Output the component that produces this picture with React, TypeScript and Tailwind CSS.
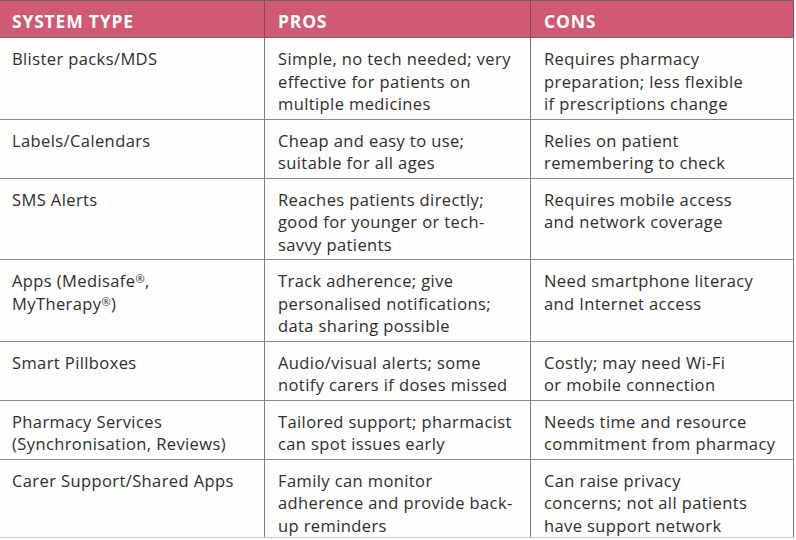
const rows: string[][][] = [
  [
    ["Blister packs/MDS"],
    ["Simple, no tech needed; very", "effective for patients on", "multiple medicines"],
    ["Requires pharmacy", "preparation; less flexible", "if prescriptions change"],
  ],
  [
    ["Labels/Calendars"],
    ["Cheap and easy to use;", "suitable for all ages"],
    ["Relies on patient", "remembering to check"],
  ],
  [
    ["SMS Alerts"],
    ["Reaches patients directly;", "good for younger or tech-", "savvy patients"],
    ["Requires mobile access", "and network coverage"],
  ],
  [
    ["Apps (Medisafe\u00ae,", "MyTherapy\u00ae)"],
    ["Track adherence; give", "personalised notifications;", "data sharing possible"],
    ["Need smartphone literacy", "and Internet access"],
  ],
  [
    ["Smart Pillboxes"],
    ["Audio/visual alerts; some", "notify carers if doses missed"],
    ["Costly; may need Wi-Fi", "or mobile connection"],
  ],
  [
    ["Pharmacy Services", "(Synchronisation, Reviews)"],
    ["Tailored support; pharmacist", "can spot issues early"],
    ["Needs time and resource", "commitment from pharmacy"],
  ],
  [
    ["Carer Support/Shared Apps"],
    ["Family can monitor", "adherence and provide back-", "up reminders"],
    ["Can raise privacy", "concerns; not all patients", "have support network"],
  ],
];

// split "®" out so it sits small and raised like the print version
const renderLine = (line: string) => {
  const parts = line.split("\u00ae");
  return parts.map((p, i) => (
    <span key={i}>
      {p}
      {i < parts.length - 1 && (
        <span className="relative -top-[4px] text-[11px] leading-none">{"\u00ae"}</span>
      )}
    </span>
  ));
};

const colClass = [
  "w-[264px]",
  "w-[266px] border-l border-[#7a7a7a]",
  "w-[264px] border-l border-r border-[#7a7a7a]",
];

export default function App() {
  return (
    <div
      className="w-[796px] h-[540px] overflow-hidden bg-[#fdfdfc] text-[#2e2e2e]"
      style={{ fontFamily: '"Open Sans", "Noto Sans", sans-serif' }}
    >
      <div className="w-[794px]">
        {/* Header */}
        <div className="flex h-[38px] bg-[#cf5a72] border-t border-b border-[#7d5a62] text-white font-bold text-[17.5px] tracking-[0.8px]">
          {["SYSTEM TYPE", "PROS", "CONS"].map((h, i) => (
            <div
              key={h}
              className={`${colClass[i]} flex items-center pt-[4px] pl-[12px] ${i > 0 ? "pl-[13px] !border-[#8e4455]" : ""}`}
            >
              {h}
            </div>
          ))}
        </div>

        {/* Body rows */}
        {rows.map((row, r) => {
          const last = r === rows.length - 1;
          return (
            <div
              key={r}
              className={`flex text-[16.5px] leading-[22.5px] tracking-[0.4px] ${r > 0 ? "border-t border-[#8a8a8a]" : ""} ${last ? "border-b !border-b-[#c9c9c9]" : ""}`}
            >
              {row.map((cell, c) => (
                <div
                  key={c}
                  className={`${colClass[c]} pt-[10px] ${last ? "pb-0" : "pb-[3px]"} whitespace-nowrap ${c === 0 ? "pl-[12px]" : "pl-[13px]"}`}
                >
                  {cell.map((line, l) => (
                    <div key={l}>{renderLine(line)}</div>
                  ))}
                </div>
              ))}
            </div>
          );
        })}
      </div>
    </div>
  );
}
